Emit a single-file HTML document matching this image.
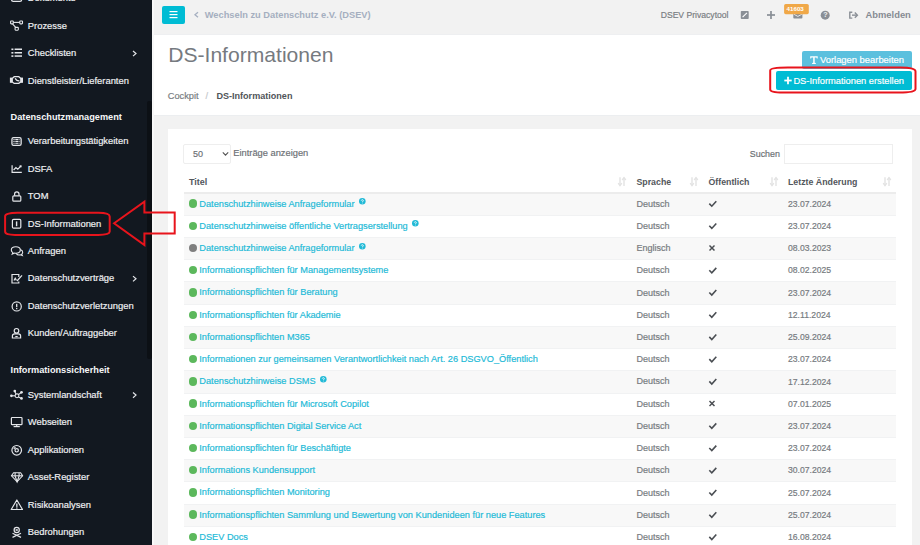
<!DOCTYPE html>
<html><head><meta charset="utf-8"><title>DS-Informationen</title><style>
html,body{margin:0;padding:0;}
body{width:920px;height:545px;overflow:hidden;position:relative;background:#f2f2f2;font-family:"Liberation Sans",sans-serif;}
.a{position:absolute;white-space:nowrap;line-height:0;-webkit-text-stroke:0.18px currentColor;}
.b{position:absolute;}
svg{position:absolute;overflow:visible;}
.qc{display:inline-block;width:10.9px;height:0;position:relative;}
.qc svg{position:absolute;left:4.3px;top:-8.5px}
</style></head><body>
<div class="b" style="left:0;top:0;width:152px;height:545px;background:#121820"></div>
<div class="b" style="left:147px;top:101px;width:5px;height:258px;background:#0c1015;border-radius:2px"></div>
<div class="b" style="left:152px;top:0;width:2px;height:545px;background:#f8f8f8"></div>
<div class="b" style="left:154px;top:0;width:766px;height:35px;background:#f2f2f2"></div><div class="b" style="left:154px;top:34px;width:766px;height:1px;background:#eeeff1"></div><div class="b" style="left:154px;top:115px;width:766px;height:1px;background:#eceef0"></div>
<div class="b" style="left:154px;top:35px;width:766px;height:80px;background:#fff"></div>
<div class="b" style="left:168px;top:129px;width:744px;height:420px;background:#fff"></div>
<div class="a" style="left:27.80px;top:-1.66px;font-size:9.4px;color:#f0f1f3;font-weight:400;">Dokumente</div>
<div class="a" style="left:27.80px;top:25.84px;font-size:9.4px;color:#f0f1f3;font-weight:400;">Prozesse</div>
<div class="a" style="left:27.80px;top:53.29px;font-size:9.4px;color:#f0f1f3;font-weight:400;">Checklisten</div>
<svg style="left:0;top:0" width="1" height="1"><polyline points="133,50.95 136,53.55 133,56.15" fill="none" stroke="#e4e6ea" stroke-width="1.2"/></svg>
<div class="a" style="left:27.80px;top:80.74px;font-size:9.4px;color:#f0f1f3;font-weight:400;">Dienstleister/Lieferanten</div>
<div class="a" style="left:27.80px;top:141.24px;font-size:9.4px;color:#f0f1f3;font-weight:400;">Verarbeitungstätigkeiten</div>
<div class="a" style="left:27.80px;top:168.69px;font-size:9.4px;color:#f0f1f3;font-weight:400;">DSFA</div>
<div class="a" style="left:27.80px;top:196.14px;font-size:9.4px;color:#f0f1f3;font-weight:400;">TOM</div>
<div class="a" style="left:27.80px;top:223.59px;font-size:9.4px;color:#f0f1f3;font-weight:400;">DS-Informationen</div>
<div class="a" style="left:27.80px;top:251.04px;font-size:9.4px;color:#f0f1f3;font-weight:400;">Anfragen</div>
<div class="a" style="left:27.80px;top:278.49px;font-size:9.4px;color:#f0f1f3;font-weight:400;">Datenschutzverträge</div>
<svg style="left:0;top:0" width="1" height="1"><polyline points="133,276.15 136,278.75 133,281.35" fill="none" stroke="#e4e6ea" stroke-width="1.2"/></svg>
<div class="a" style="left:27.80px;top:305.94px;font-size:9.4px;color:#f0f1f3;font-weight:400;">Datenschutzverletzungen</div>
<div class="a" style="left:27.80px;top:333.39px;font-size:9.4px;color:#f0f1f3;font-weight:400;">Kunden/Auftraggeber</div>
<div class="a" style="left:27.80px;top:394.84px;font-size:9.4px;color:#f0f1f3;font-weight:400;">Systemlandschaft</div>
<svg style="left:0;top:0" width="1" height="1"><polyline points="133,392.50 136,395.10 133,397.70" fill="none" stroke="#e4e6ea" stroke-width="1.2"/></svg>
<div class="a" style="left:27.80px;top:422.29px;font-size:9.4px;color:#f0f1f3;font-weight:400;">Webseiten</div>
<div class="a" style="left:27.80px;top:449.74px;font-size:9.4px;color:#f0f1f3;font-weight:400;">Applikationen</div>
<div class="a" style="left:27.80px;top:477.19px;font-size:9.4px;color:#f0f1f3;font-weight:400;">Asset-Register</div>
<div class="a" style="left:27.80px;top:504.64px;font-size:9.4px;color:#f0f1f3;font-weight:400;">Risikoanalysen</div>
<div class="a" style="left:27.80px;top:532.09px;font-size:9.4px;color:#f0f1f3;font-weight:400;">Bedrohungen</div>
<div class="a" style="left:10.60px;top:117.31px;font-size:9.2px;color:#f5f6f8;font-weight:700;-webkit-text-stroke:0;">Datenschutzmanagement</div>
<div class="a" style="left:10.60px;top:370.21px;font-size:9.2px;color:#f5f6f8;font-weight:700;-webkit-text-stroke:0;">Informationssicherheit</div>
<svg style="left:0;top:0" width="152" height="545"><rect x="11.6" y="-6" width="10" height="7.4" rx="1.6" fill="none" stroke="#e4e6ea" stroke-width="1.3"/><g fill="none" stroke="#e4e6ea" stroke-width="1.1"><rect x="10.6" y="21" width="2.7" height="2.9" rx="0.6"/><rect x="19.8" y="21" width="2.7" height="2.9" rx="0.6"/><rect x="15.1" y="27.4" width="3.2" height="2.8" rx="0.6"/><line x1="13.3" y1="22.4" x2="19.8" y2="22.4"/><line x1="12.6" y1="23.9" x2="15.6" y2="27.4"/></g><g fill="#e4e6ea"><rect x="11.4" y="48.5" width="2" height="1.6"/><rect x="11.4" y="52" width="2" height="1.6"/><rect x="11.4" y="55.3" width="2" height="1.6"/><rect x="14.6" y="48.5" width="7.4" height="1.5"/><rect x="14.6" y="52" width="7.4" height="1.5"/><rect x="14.6" y="55.3" width="7.4" height="1.5"/></g><g fill="#e4e6ea"><rect x="9.9" y="77.6" width="2.4" height="5.2"/><rect x="20.6" y="77.6" width="2.4" height="5.2"/></g><g fill="none" stroke="#e4e6ea" stroke-width="1.3"><path d="M14.2 76.7 H18.8 L20.9 78.5 V81.9 L18.8 83.4 H14.2 L12.2 81.9 V78.5 Z"/><path d="M15.2 78.2 C16 80 17.5 81 19.5 80.8"/></g><g fill="none" stroke="#e4e6ea" stroke-width="1.3"><rect x="11.95" y="137.55" width="9.2" height="7.8" rx="1.6"/></g><g stroke="#e4e6ea" stroke-width="1.05" stroke-dasharray="1.2 0.7 3.2 0.7 1.2"><line x1="13.4" y1="139.6" x2="19.7" y2="139.6"/><line x1="13.4" y1="141.45" x2="19.7" y2="141.45"/><line x1="13.4" y1="143.3" x2="19.7" y2="143.3"/></g><g fill="none" stroke="#e4e6ea" stroke-width="1.2"><polyline points="12.1,165.3 12.1,172.3 21.8,172.3"/><polyline points="13.6,170 15.9,167.6 17.8,169.2 20.8,166.2"/></g><rect x="19.6" y="165.3" width="2" height="2" fill="#e4e6ea"/><g fill="none" stroke="#e4e6ea" stroke-width="1.2"><rect x="12.8" y="195.8" width="8" height="5.4" rx="1"/><path d="M14.6 195.8 V194 A2.2 2.2 0 0 1 19 194 V195.8"/></g><g fill="none" stroke="#e4e6ea" stroke-width="1.2"><rect x="12.4" y="219.3" width="8.4" height="8.8" rx="1.2"/></g><rect x="15.9" y="221.4" width="1.4" height="4.8" fill="#e4e6ea"/><g fill="none" stroke="#e4e6ea" stroke-width="1.1"><path d="M15.8 246.8 C12.7 246.8 11.3 248.4 11.3 250 C11.3 251.1 12 252 12.9 252.6 L12.2 254.2 L14.6 253.1 C15 253.2 15.4 253.2 15.8 253.2 C18.9 253.2 20.3 251.6 20.3 250 C20.3 248.4 18.9 246.8 15.8 246.8 Z"/><path d="M20.3 249.6 C21.9 250.2 22.7 251.2 22.7 252.3 C22.7 253.1 22.3 253.8 21.7 254.3 L22.3 255.5 L20.3 254.8 C18.6 255.2 16.7 254.6 15.9 253.3"/></g><g fill="none" stroke="#e4e6ea" stroke-width="1.2"><path d="M18.8 277 V274.5 H12 V283 H18.8 V281.6"/><path d="M14 280.5 L15.2 278.2 L16.4 280.4"/><path d="M17 281 L22 275.4"/></g><g fill="none" stroke="#e4e6ea" stroke-width="1.2"><circle cx="16.7" cy="306.4" r="4.6"/></g><rect x="16.05" y="303.8" width="1.3" height="3.3" fill="#e4e6ea"/><rect x="16.05" y="307.9" width="1.3" height="1.3" fill="#e4e6ea"/><g fill="none" stroke="#e4e6ea" stroke-width="1.2"><circle cx="16.5" cy="330.8" r="2.3"/><path d="M12.4 338 V336 C12.4 334.6 13.6 333.9 14.6 333.9 H18.4 C19.4 333.9 20.6 334.6 20.6 336 V338 Z"/><path d="M15.3 336.6 H17.7"/></g><g fill="none" stroke="#e4e6ea" stroke-width="1.1"><circle cx="17" cy="395.8" r="1.9"/><line x1="11.4" y1="395.8" x2="15.1" y2="395.8"/><line x1="14.8" y1="391.1" x2="16" y2="394.1"/><line x1="21.5" y1="392.3" x2="18.5" y2="394.6"/><line x1="21.5" y1="398.4" x2="18.5" y2="397"/></g><g fill="#e4e6ea"><circle cx="11.4" cy="395.8" r="1.35"/><circle cx="14.8" cy="391.1" r="1.35"/><circle cx="21.5" cy="392.3" r="1.35"/><circle cx="21.5" cy="398.4" r="1.35"/></g><g fill="none" stroke="#e4e6ea" stroke-width="1.2"><rect x="11.4" y="417.5" width="10.6" height="7.2" rx="0.8"/><line x1="16.7" y1="424.7" x2="16.7" y2="426.6"/><line x1="13.6" y1="426.6" x2="19.8" y2="426.6"/></g><g fill="none" stroke="#e4e6ea" stroke-width="1.2"><circle cx="16.7" cy="450.3" r="4.8"/><circle cx="16.7" cy="450.3" r="1.7"/><path d="M13.9 449 A3 3 0 0 1 15.6 447.3"/></g><g fill="none" stroke="#e4e6ea" stroke-width="1.1"><path d="M13.6 472.8 H20.6 L22.6 475.8 L17.1 481.8 L11.5 475.8 Z"/><path d="M11.5 475.8 H22.6"/><path d="M15 475.8 L17.1 481.8 L19.2 475.8"/><path d="M15.2 472.8 L15 475.8 M19 472.8 L19.2 475.8"/></g><g fill="none" stroke="#e4e6ea" stroke-width="1.2" stroke-linejoin="round"><path d="M16.85 500 L11.2 509.5 H22.5 Z"/></g><rect x="16.2" y="503.5" width="1.3" height="3.4" fill="#e4e6ea"/><rect x="16.2" y="507.4" width="1.3" height="1.2" fill="#e4e6ea"/><g fill="none" stroke="#e4e6ea" stroke-width="1.2"><circle cx="16.7" cy="530" r="2.6"/><line x1="12.5" y1="533.2" x2="21" y2="537.4"/><line x1="21" y1="533.2" x2="12.5" y2="537.4"/></g><rect x="15.6" y="529.2" width="2.2" height="1.6" fill="#e4e6ea"/></svg>
<div class="b" style="left:162px;top:6px;width:23px;height:18px;background:#00bcd4;border-radius:2px"></div>
<svg style="left:0;top:0" width="1" height="1"><g stroke="#fff" stroke-width="1.2"><line x1="169.5" y1="11.6" x2="177.5" y2="11.6"/><line x1="169.5" y1="14.6" x2="177.5" y2="14.6"/><line x1="169.5" y1="17.6" x2="177.5" y2="17.6"/></g></svg>
<svg style="left:0;top:0" width="1" height="1"><polyline points="198,12.3 195,14.8 198,17.3" fill="none" stroke="#a5afc0" stroke-width="1.3"/></svg>
<div class="a" style="left:204.80px;top:15.38px;font-size:9.28px;color:#a5afc0;font-weight:700;-webkit-text-stroke:0;">Wechseln zu Datenschutz e.V. (DSEV)</div>
<div class="a" style="left:660.70px;top:15.32px;font-size:8.6px;color:#797d82;font-weight:400;">DSEV Privacytool</div>
<div class="a" style="left:865.50px;top:15.34px;font-size:9.4px;color:#868b92;font-weight:700;-webkit-text-stroke:0;">Abmelden</div>
<div class="a" style="left:168.20px;top:54.69px;font-size:21.1px;color:#767a7f;font-weight:400;-webkit-text-stroke:0;">DS-Informationen</div>
<div class="a" style="left:167.80px;top:96.39px;font-size:9.26px;color:#777b80;font-weight:400;">Cockpit</div>
<div class="a" style="left:205.50px;top:96.39px;font-size:9.26px;color:#c4c7cb;font-weight:400;">/</div>
<div class="a" style="left:216.40px;top:96.46px;font-size:9.07px;color:#505459;font-weight:700;-webkit-text-stroke:0;">DS-Informationen</div>
<div class="b" style="left:802px;top:51px;width:110px;height:18px;background:#5bc0de;border-radius:2px"></div>
<div class="a" style="left:820.00px;top:60.25px;font-size:9.38px;color:#fff;font-weight:400;">Vorlagen bearbeiten</div>
<div class="b" style="left:776px;top:70.6px;width:136px;height:19.8px;background:#00bcd4;border-radius:2px"></div>
<div class="a" style="left:793.40px;top:80.98px;font-size:9.3px;color:#fff;font-weight:400;">DS-Informationen erstellen</div>
<div class="b" style="left:183.3px;top:144.3px;width:47.4px;height:19.3px;box-sizing:border-box;border:1px solid #eeeeee;border-radius:2px"></div>
<div class="a" style="left:193.00px;top:153.58px;font-size:9.0px;color:#6c7075;font-weight:400;">50</div>
<div class="a" style="left:233.30px;top:153.18px;font-size:9.3px;color:#6c7075;font-weight:400;">Einträge anzeigen</div>
<div class="a" style="left:749.80px;top:153.52px;font-size:8.9px;color:#6c7075;font-weight:400;">Suchen</div>
<div class="b" style="left:784.3px;top:144.1px;width:109px;height:19.6px;box-sizing:border-box;border:1px solid #eeeeee"></div>
<div class="a" style="left:189.00px;top:181.58px;font-size:9.0px;color:#53575c;font-weight:700;-webkit-text-stroke:0;">Titel</div>
<div class="a" style="left:636.40px;top:181.64px;font-size:8.82px;color:#53575c;font-weight:700;-webkit-text-stroke:0;">Sprache</div>
<div class="a" style="left:708.50px;top:181.66px;font-size:8.78px;color:#53575c;font-weight:700;-webkit-text-stroke:0;">Öffentlich</div>
<div class="a" style="left:788.00px;top:181.65px;font-size:8.8px;color:#53575c;font-weight:700;-webkit-text-stroke:0;">Letzte Änderung</div>

<div class="b" style="left:183.5px;top:192.60px;width:712.5px;height:22.22px;background:#f8f8f8"></div>
<div class="b" style="left:183.5px;top:192px;width:712.5px;height:2px;background:#ececec"></div>
<div class="b" style="left:188.7px;top:199.40px;width:8.4px;height:8.4px;border-radius:50%;background:#5cb85c"></div>
<div class="a" style="left:199.30px;top:203.61px;font-size:9.22px;color:#22bad7;font-weight:400;">Datenschutzhinweise Anfrageformular<span class="qc"><svg width="6.6" height="6.6" viewBox="0 0 10 10" ><circle cx="5" cy="5" r="5" fill="#22bad7"/><path d="M3.5 3.9 C3.5 2.2 6.6 2.2 6.6 3.9 C6.6 5 5.1 5 5.1 6.1" fill="none" stroke="#fff" stroke-width="1.3"/><circle cx="5.1" cy="7.7" r="0.75" fill="#fff"/></svg></span></div>
<div class="a" style="left:636.40px;top:203.66px;font-size:9.05px;color:#767b80;font-weight:400;">Deutsch</div>
<div class="a" style="left:788.00px;top:203.80px;font-size:8.65px;color:#767b80;font-weight:400;">23.07.2024</div>
<svg style="left:0;top:0" width="1" height="1"><polyline points="709.3,203.60 711.8,206.20 716.3,201.20" fill="none" stroke="#4a4e53" stroke-width="1.6"/></svg>
<div class="b" style="left:183.5px;top:214.82px;width:712.5px;height:1px;background:#f1f2f3"></div>
<div class="b" style="left:188.7px;top:221.62px;width:8.4px;height:8.4px;border-radius:50%;background:#5cb85c"></div>
<div class="a" style="left:199.30px;top:225.83px;font-size:9.22px;color:#22bad7;font-weight:400;">Datenschutzhinweise öffentliche Vertragserstellung<span class="qc"><svg width="6.6" height="6.6" viewBox="0 0 10 10" ><circle cx="5" cy="5" r="5" fill="#22bad7"/><path d="M3.5 3.9 C3.5 2.2 6.6 2.2 6.6 3.9 C6.6 5 5.1 5 5.1 6.1" fill="none" stroke="#fff" stroke-width="1.3"/><circle cx="5.1" cy="7.7" r="0.75" fill="#fff"/></svg></span></div>
<div class="a" style="left:636.40px;top:225.88px;font-size:9.05px;color:#767b80;font-weight:400;">Deutsch</div>
<div class="a" style="left:788.00px;top:226.02px;font-size:8.65px;color:#767b80;font-weight:400;">23.07.2024</div>
<svg style="left:0;top:0" width="1" height="1"><polyline points="709.3,225.82 711.8,228.42 716.3,223.42" fill="none" stroke="#4a4e53" stroke-width="1.6"/></svg>
<div class="b" style="left:183.5px;top:237.04px;width:712.5px;height:22.22px;background:#f8f8f8"></div>
<div class="b" style="left:183.5px;top:237.04px;width:712.5px;height:1px;background:#f1f2f3"></div>
<div class="b" style="left:188.7px;top:243.84px;width:8.4px;height:8.4px;border-radius:50%;background:#7f7f7f"></div>
<div class="a" style="left:199.30px;top:248.05px;font-size:9.22px;color:#22bad7;font-weight:400;">Datenschutzhinweise Anfrageformular<span class="qc"><svg width="6.6" height="6.6" viewBox="0 0 10 10" ><circle cx="5" cy="5" r="5" fill="#22bad7"/><path d="M3.5 3.9 C3.5 2.2 6.6 2.2 6.6 3.9 C6.6 5 5.1 5 5.1 6.1" fill="none" stroke="#fff" stroke-width="1.3"/><circle cx="5.1" cy="7.7" r="0.75" fill="#fff"/></svg></span></div>
<div class="a" style="left:636.40px;top:248.10px;font-size:9.05px;color:#767b80;font-weight:400;">Englisch</div>
<div class="a" style="left:788.00px;top:248.24px;font-size:8.65px;color:#767b80;font-weight:400;">08.03.2023</div>
<svg style="left:0;top:0" width="1" height="1"><g stroke="#4a4e53" stroke-width="1.5"><line x1="709.5" y1="245.54" x2="714.5" y2="250.54"/><line x1="714.5" y1="245.54" x2="709.5" y2="250.54"/></g></svg>
<div class="b" style="left:183.5px;top:259.26px;width:712.5px;height:1px;background:#f1f2f3"></div>
<div class="b" style="left:188.7px;top:266.06px;width:8.4px;height:8.4px;border-radius:50%;background:#5cb85c"></div>
<div class="a" style="left:199.30px;top:270.27px;font-size:9.22px;color:#22bad7;font-weight:400;">Informationspflichten für Managementsysteme</div>
<div class="a" style="left:636.40px;top:270.32px;font-size:9.05px;color:#767b80;font-weight:400;">Deutsch</div>
<div class="a" style="left:788.00px;top:270.46px;font-size:8.65px;color:#767b80;font-weight:400;">08.02.2025</div>
<svg style="left:0;top:0" width="1" height="1"><polyline points="709.3,270.26 711.8,272.86 716.3,267.86" fill="none" stroke="#4a4e53" stroke-width="1.6"/></svg>
<div class="b" style="left:183.5px;top:281.48px;width:712.5px;height:22.22px;background:#f8f8f8"></div>
<div class="b" style="left:183.5px;top:281.48px;width:712.5px;height:1px;background:#f1f2f3"></div>
<div class="b" style="left:188.7px;top:288.28px;width:8.4px;height:8.4px;border-radius:50%;background:#5cb85c"></div>
<div class="a" style="left:199.30px;top:292.49px;font-size:9.22px;color:#22bad7;font-weight:400;">Informationspflichten für Beratung</div>
<div class="a" style="left:636.40px;top:292.54px;font-size:9.05px;color:#767b80;font-weight:400;">Deutsch</div>
<div class="a" style="left:788.00px;top:292.68px;font-size:8.65px;color:#767b80;font-weight:400;">23.07.2024</div>
<svg style="left:0;top:0" width="1" height="1"><polyline points="709.3,292.48 711.8,295.08 716.3,290.08" fill="none" stroke="#4a4e53" stroke-width="1.6"/></svg>
<div class="b" style="left:183.5px;top:303.70px;width:712.5px;height:1px;background:#f1f2f3"></div>
<div class="b" style="left:188.7px;top:310.50px;width:8.4px;height:8.4px;border-radius:50%;background:#5cb85c"></div>
<div class="a" style="left:199.30px;top:314.71px;font-size:9.22px;color:#22bad7;font-weight:400;">Informationspflichten für Akademie</div>
<div class="a" style="left:636.40px;top:314.76px;font-size:9.05px;color:#767b80;font-weight:400;">Deutsch</div>
<div class="a" style="left:788.00px;top:314.90px;font-size:8.65px;color:#767b80;font-weight:400;">12.11.2024</div>
<svg style="left:0;top:0" width="1" height="1"><polyline points="709.3,314.70 711.8,317.30 716.3,312.30" fill="none" stroke="#4a4e53" stroke-width="1.6"/></svg>
<div class="b" style="left:183.5px;top:325.92px;width:712.5px;height:22.22px;background:#f8f8f8"></div>
<div class="b" style="left:183.5px;top:325.92px;width:712.5px;height:1px;background:#f1f2f3"></div>
<div class="b" style="left:188.7px;top:332.72px;width:8.4px;height:8.4px;border-radius:50%;background:#5cb85c"></div>
<div class="a" style="left:199.30px;top:336.93px;font-size:9.22px;color:#22bad7;font-weight:400;">Informationspflichten M365</div>
<div class="a" style="left:636.40px;top:336.98px;font-size:9.05px;color:#767b80;font-weight:400;">Deutsch</div>
<div class="a" style="left:788.00px;top:337.12px;font-size:8.65px;color:#767b80;font-weight:400;">25.09.2024</div>
<svg style="left:0;top:0" width="1" height="1"><polyline points="709.3,336.92 711.8,339.52 716.3,334.52" fill="none" stroke="#4a4e53" stroke-width="1.6"/></svg>
<div class="b" style="left:183.5px;top:348.14px;width:712.5px;height:1px;background:#f1f2f3"></div>
<div class="b" style="left:188.7px;top:354.94px;width:8.4px;height:8.4px;border-radius:50%;background:#5cb85c"></div>
<div class="a" style="left:199.30px;top:359.15px;font-size:9.22px;color:#22bad7;font-weight:400;">Informationen zur gemeinsamen Verantwortlichkeit nach Art. 26 DSGVO_Öffentlich</div>
<div class="a" style="left:636.40px;top:359.20px;font-size:9.05px;color:#767b80;font-weight:400;">Deutsch</div>
<div class="a" style="left:788.00px;top:359.34px;font-size:8.65px;color:#767b80;font-weight:400;">23.07.2024</div>
<svg style="left:0;top:0" width="1" height="1"><polyline points="709.3,359.14 711.8,361.74 716.3,356.74" fill="none" stroke="#4a4e53" stroke-width="1.6"/></svg>
<div class="b" style="left:183.5px;top:370.36px;width:712.5px;height:22.22px;background:#f8f8f8"></div>
<div class="b" style="left:183.5px;top:370.36px;width:712.5px;height:1px;background:#f1f2f3"></div>
<div class="b" style="left:188.7px;top:377.16px;width:8.4px;height:8.4px;border-radius:50%;background:#5cb85c"></div>
<div class="a" style="left:199.30px;top:381.37px;font-size:9.22px;color:#22bad7;font-weight:400;">Datenschutzhinweise DSMS<span class="qc"><svg width="6.6" height="6.6" viewBox="0 0 10 10" ><circle cx="5" cy="5" r="5" fill="#22bad7"/><path d="M3.5 3.9 C3.5 2.2 6.6 2.2 6.6 3.9 C6.6 5 5.1 5 5.1 6.1" fill="none" stroke="#fff" stroke-width="1.3"/><circle cx="5.1" cy="7.7" r="0.75" fill="#fff"/></svg></span></div>
<div class="a" style="left:636.40px;top:381.42px;font-size:9.05px;color:#767b80;font-weight:400;">Deutsch</div>
<div class="a" style="left:788.00px;top:381.56px;font-size:8.65px;color:#767b80;font-weight:400;">17.12.2024</div>
<svg style="left:0;top:0" width="1" height="1"><polyline points="709.3,381.36 711.8,383.96 716.3,378.96" fill="none" stroke="#4a4e53" stroke-width="1.6"/></svg>
<div class="b" style="left:183.5px;top:392.58px;width:712.5px;height:1px;background:#f1f2f3"></div>
<div class="b" style="left:188.7px;top:399.38px;width:8.4px;height:8.4px;border-radius:50%;background:#5cb85c"></div>
<div class="a" style="left:199.30px;top:403.59px;font-size:9.22px;color:#22bad7;font-weight:400;">Informationspflichten für Microsoft Copilot</div>
<div class="a" style="left:636.40px;top:403.64px;font-size:9.05px;color:#767b80;font-weight:400;">Deutsch</div>
<div class="a" style="left:788.00px;top:403.78px;font-size:8.65px;color:#767b80;font-weight:400;">07.01.2025</div>
<svg style="left:0;top:0" width="1" height="1"><g stroke="#4a4e53" stroke-width="1.5"><line x1="709.5" y1="401.08" x2="714.5" y2="406.08"/><line x1="714.5" y1="401.08" x2="709.5" y2="406.08"/></g></svg>
<div class="b" style="left:183.5px;top:414.80px;width:712.5px;height:22.22px;background:#f8f8f8"></div>
<div class="b" style="left:183.5px;top:414.80px;width:712.5px;height:1px;background:#f1f2f3"></div>
<div class="b" style="left:188.7px;top:421.60px;width:8.4px;height:8.4px;border-radius:50%;background:#5cb85c"></div>
<div class="a" style="left:199.30px;top:425.81px;font-size:9.22px;color:#22bad7;font-weight:400;">Informationspflichten Digital Service Act</div>
<div class="a" style="left:636.40px;top:425.86px;font-size:9.05px;color:#767b80;font-weight:400;">Deutsch</div>
<div class="a" style="left:788.00px;top:426.00px;font-size:8.65px;color:#767b80;font-weight:400;">23.07.2024</div>
<svg style="left:0;top:0" width="1" height="1"><polyline points="709.3,425.80 711.8,428.40 716.3,423.40" fill="none" stroke="#4a4e53" stroke-width="1.6"/></svg>
<div class="b" style="left:183.5px;top:437.02px;width:712.5px;height:1px;background:#f1f2f3"></div>
<div class="b" style="left:188.7px;top:443.82px;width:8.4px;height:8.4px;border-radius:50%;background:#5cb85c"></div>
<div class="a" style="left:199.30px;top:448.03px;font-size:9.22px;color:#22bad7;font-weight:400;">Informationspflichten für Beschäftigte</div>
<div class="a" style="left:636.40px;top:448.08px;font-size:9.05px;color:#767b80;font-weight:400;">Deutsch</div>
<div class="a" style="left:788.00px;top:448.22px;font-size:8.65px;color:#767b80;font-weight:400;">23.07.2024</div>
<svg style="left:0;top:0" width="1" height="1"><polyline points="709.3,448.02 711.8,450.62 716.3,445.62" fill="none" stroke="#4a4e53" stroke-width="1.6"/></svg>
<div class="b" style="left:183.5px;top:459.24px;width:712.5px;height:22.22px;background:#f8f8f8"></div>
<div class="b" style="left:183.5px;top:459.24px;width:712.5px;height:1px;background:#f1f2f3"></div>
<div class="b" style="left:188.7px;top:466.04px;width:8.4px;height:8.4px;border-radius:50%;background:#5cb85c"></div>
<div class="a" style="left:199.30px;top:470.25px;font-size:9.22px;color:#22bad7;font-weight:400;">Informations Kundensupport</div>
<div class="a" style="left:636.40px;top:470.30px;font-size:9.05px;color:#767b80;font-weight:400;">Deutsch</div>
<div class="a" style="left:788.00px;top:470.44px;font-size:8.65px;color:#767b80;font-weight:400;">30.07.2024</div>
<svg style="left:0;top:0" width="1" height="1"><polyline points="709.3,470.24 711.8,472.84 716.3,467.84" fill="none" stroke="#4a4e53" stroke-width="1.6"/></svg>
<div class="b" style="left:183.5px;top:481.46px;width:712.5px;height:1px;background:#f1f2f3"></div>
<div class="b" style="left:188.7px;top:488.26px;width:8.4px;height:8.4px;border-radius:50%;background:#5cb85c"></div>
<div class="a" style="left:199.30px;top:492.47px;font-size:9.22px;color:#22bad7;font-weight:400;">Informationspflichten Monitoring</div>
<div class="a" style="left:636.40px;top:492.52px;font-size:9.05px;color:#767b80;font-weight:400;">Deutsch</div>
<div class="a" style="left:788.00px;top:492.66px;font-size:8.65px;color:#767b80;font-weight:400;">25.07.2024</div>
<svg style="left:0;top:0" width="1" height="1"><polyline points="709.3,492.46 711.8,495.06 716.3,490.06" fill="none" stroke="#4a4e53" stroke-width="1.6"/></svg>
<div class="b" style="left:183.5px;top:503.68px;width:712.5px;height:22.22px;background:#f8f8f8"></div>
<div class="b" style="left:183.5px;top:503.68px;width:712.5px;height:1px;background:#f1f2f3"></div>
<div class="b" style="left:188.7px;top:510.48px;width:8.4px;height:8.4px;border-radius:50%;background:#5cb85c"></div>
<div class="a" style="left:199.30px;top:514.69px;font-size:9.22px;color:#22bad7;font-weight:400;">Informationspflichten Sammlung und Bewertung von Kundenideen für neue Features</div>
<div class="a" style="left:636.40px;top:514.74px;font-size:9.05px;color:#767b80;font-weight:400;">Deutsch</div>
<div class="a" style="left:788.00px;top:514.88px;font-size:8.65px;color:#767b80;font-weight:400;">25.07.2024</div>
<svg style="left:0;top:0" width="1" height="1"><polyline points="709.3,514.68 711.8,517.28 716.3,512.28" fill="none" stroke="#4a4e53" stroke-width="1.6"/></svg>
<div class="b" style="left:183.5px;top:525.90px;width:712.5px;height:1px;background:#f1f2f3"></div>
<div class="b" style="left:188.7px;top:532.70px;width:8.4px;height:8.4px;border-radius:50%;background:#5cb85c"></div>
<div class="a" style="left:199.30px;top:536.91px;font-size:9.22px;color:#22bad7;font-weight:400;">DSEV Docs</div>
<div class="a" style="left:636.40px;top:536.96px;font-size:9.05px;color:#767b80;font-weight:400;">Deutsch</div>
<div class="a" style="left:788.00px;top:537.10px;font-size:8.65px;color:#767b80;font-weight:400;">16.08.2024</div>
<svg style="left:0;top:0" width="1" height="1"><polyline points="709.3,536.90 711.8,539.50 716.3,534.50" fill="none" stroke="#4a4e53" stroke-width="1.6"/></svg>
<svg style="left:0;top:0" width="920" height="545"><rect x="740.8" y="11" width="7.9" height="8" rx="0.8" fill="#8a8f96"/><line x1="742.6" y1="17.2" x2="746.9" y2="12.8" stroke="#fff" stroke-width="1.1"/><g stroke="#8a8f96" stroke-width="1.7"><line x1="767" y1="15" x2="775" y2="15"/><line x1="771" y1="11" x2="771" y2="19"/></g><rect x="793.3" y="12" width="9.1" height="6.6" rx="0.8" fill="#8a8f96"/><polyline points="793.8,14.2 797.85,16.4 801.9,14.2" fill="none" stroke="#f1f1f1" stroke-width="0.9"/><rect x="784.1" y="4" width="24.7" height="10.2" rx="1.6" fill="#f0a848"/><circle cx="825.2" cy="15.15" r="4.5" fill="#8a8f96"/><g fill="none" stroke="#8a8f96" stroke-width="1.4"><polyline points="852.3,12.2 849.8,12.2 849.8,18.1 852.3,18.1"/><line x1="852" y1="15.15" x2="856.8" y2="15.15"/><polyline points="854.8,12.6 857.4,15.15 854.8,17.7"/></g><g stroke="#e3e3e3" stroke-width="1.4" fill="none"><line x1="620.0" y1="177.2" x2="620.0" y2="185.4"/><polyline points="618.2,183.2 620.0,185.6 621.8,183.2"/><line x1="624.0" y1="177.8" x2="624.0" y2="186"/><polyline points="622.2,180 624.0,177.6 625.8,180"/></g><g stroke="#e3e3e3" stroke-width="1.4" fill="none"><line x1="692.0" y1="177.2" x2="692.0" y2="185.4"/><polyline points="690.2,183.2 692.0,185.6 693.8,183.2"/><line x1="696.0" y1="177.8" x2="696.0" y2="186"/><polyline points="694.2,180 696.0,177.6 697.8,180"/></g><g stroke="#e3e3e3" stroke-width="1.4" fill="none"><line x1="772.0" y1="177.2" x2="772.0" y2="185.4"/><polyline points="770.2,183.2 772.0,185.6 773.8,183.2"/><line x1="776.0" y1="177.8" x2="776.0" y2="186"/><polyline points="774.2,180 776.0,177.6 777.8,180"/></g><g stroke="#e3e3e3" stroke-width="1.4" fill="none"><line x1="885.0" y1="177.2" x2="885.0" y2="185.4"/><polyline points="883.2,183.2 885.0,185.6 886.8,183.2"/><line x1="889.0" y1="177.8" x2="889.0" y2="186"/><polyline points="887.2,180 889.0,177.6 890.8,180"/></g><polyline points="222.8,152.4 225.5,155.2 228.2,152.4" fill="none" stroke="#555" stroke-width="1.1"/><g fill="#fff"><path d="M810.2 56.3 H817.7 V58.6 H816.8 L816.4 57.4 H814.7 V62.8 L815.8 63.1 V63.9 H812.1 V63.1 L813.2 62.8 V57.4 H811.5 L811.1 58.6 H810.2 Z"/></g><g stroke="#fff" stroke-width="1.8"><line x1="784.3" y1="80.5" x2="791.7" y2="80.5"/><line x1="788" y1="76.8" x2="788" y2="84.2"/></g></svg>
<div class="a" style="left:786.60px;top:9.35px;font-size:6.2px;color:#fff;font-weight:700;-webkit-text-stroke:0;">41603</div>
<div class="a" style="left:823.20px;top:15.21px;font-size:7.2px;color:#f1f1f1;font-weight:700;-webkit-text-stroke:0;">?</div>
<svg style="left:0;top:0" width="920" height="545"><path d="M17.6 212.7 H98.3 C105 212.7 109.7 213.5 109.7 216.5 V231.5 C109.7 234 105 234.9 98.3 234.9 H15 C9 234.9 5.1 234 5.1 231.4 V216.3 C5.1 213.7 9 212.7 17.6 212.7 Z" fill="none" stroke="#e8141c" stroke-width="2"/><polygon points="114.1,223.3 144.4,201.6 144.4,212.4 174.7,212.4 174.7,233.5 144.4,233.5 144.4,245" fill="none" stroke="#e8141c" stroke-width="2" stroke-linejoin="miter"/><path d="M788 67.6 H900 C909 67.6 915.5 68.5 915.5 71.5 V89 C915.5 91.5 909 92.5 899 92.5 H783 C775 92.5 770.2 91.7 770.2 89.5 V70.5 C770.2 68.5 777 67.6 788 67.6 Z" fill="none" stroke="#e8141c" stroke-width="2"/></svg>
</body></html>
